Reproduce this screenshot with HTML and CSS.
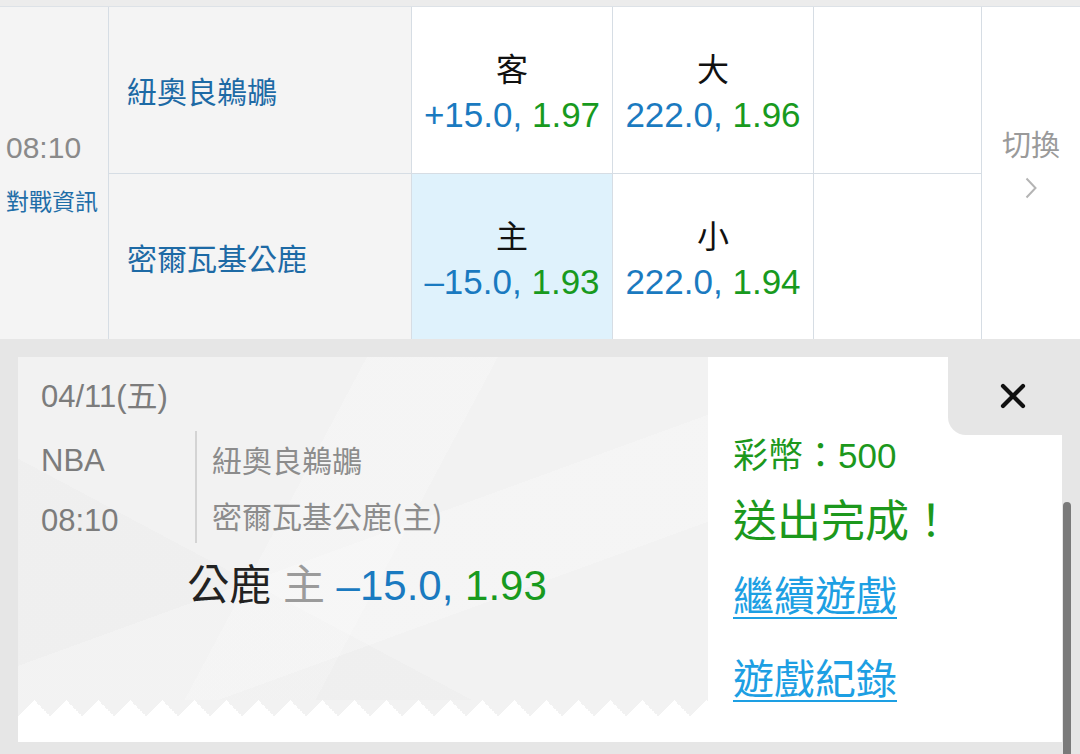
FILE: index.html
```html
<!DOCTYPE html>
<html lang="zh-Hant">
<head>
	<meta charset="UTF-8">
	<title>投注完成</title>
	<link rel="stylesheet" href="styles.css">
</head>
<body>
	<div class="topbar"></div>
	<div class="board">
		<div class="cell time-cell">
			<div class="time">08:10</div>
			<a class="vs-info">對戰資訊</a>
		</div>
		<div class="cell team">紐奧良鵜鶘</div>
		<div class="cell odds">
			<div class="label">客</div>
			<div class="line"><span class="hdp">+15.0,</span> <span class="price">1.97</span></div>
		</div>
		<div class="cell odds">
			<div class="label">大</div>
			<div class="line"><span class="hdp">222.0,</span> <span class="price">1.96</span></div>
		</div>
		<div class="cell"></div>
		<div class="cell switch">
			<div class="switch-text">切換</div>
			<svg class="chevron" width="12" height="22" viewBox="0 0 12 22">
				<polyline points="1.5,1.5 10.5,11 1.5,20.5" fill="none" stroke="#b4b4b4" stroke-width="2"/>
			</svg>
		</div>
		<div class="cell team">密爾瓦基公鹿</div>
		<div class="cell odds picked">
			<div class="label">主</div>
			<div class="line"><span class="hdp">–15.0,</span> <span class="price">1.93</span></div>
		</div>
		<div class="cell odds">
			<div class="label">小</div>
			<div class="line"><span class="hdp">222.0,</span> <span class="price">1.94</span></div>
		</div>
		<div class="cell"></div>
	</div>

	<div class="sheet">
		<div class="ticket">
			<div class="ticket-main">
				<div class="ticket-body">
					<div class="date">04/11(五)</div>
					<div class="info">
						<div class="meta">
							<div>NBA</div>
							<div>08:10</div>
						</div>
						<div class="teams">
							<div>紐奧良鵜鶘</div>
							<div>密爾瓦基公鹿(主)</div>
						</div>
					</div>
					<div class="bet">
						<span class="bet-team">公鹿</span>
						<span class="bet-side">主</span>
						<span class="hdp">–15.0,</span>
						<span class="price">1.93</span>
					</div>
				</div>
				<div class="ticket-edge"></div>
			</div>
			<div class="ticket-side">
				<div class="close-row">
					<div class="close">
						<svg width="28" height="28" viewBox="0 0 28 28">
							<path d="M4 4 L24 24 M24 4 L4 24" stroke="#111" stroke-width="4.2" stroke-linecap="round"/>
						</svg>
					</div>
				</div>
				<div class="coins">彩幣：500</div>
				<div class="done">送出完成！</div>
				<a class="link first">繼續遊戲</a>
				<a class="link">遊戲紀錄</a>
			</div>
		</div>
		<div class="scrollbar"></div>
	</div>
</body>
</html>
```

FILE: styles.css
```css
* { margin: 0; padding: 0; box-sizing: border-box; }
body {
	width: 1080px;
	height: 754px;
	overflow: hidden;
	background-color: #e6e6e6;
	font-family: "Liberation Sans", "Noto Sans CJK TC", sans-serif;
}

.topbar {
	height: 7px;
	background-color: #ececec;
	border-bottom: 1px solid #dde2e7;
}

/* 賽事表格 */
.board {
	display: grid;
	grid-template-columns: 108px 302px 200px 200px 167px 98px;
	grid-template-rows: 166px 165px;
	gap: 1px;
	background-color: #d6dde4;
}
.cell {
	background-color: #fff;
}
.time-cell {
	grid-row: span 2;
	background-color: #f4f4f4;
	display: flex;
	flex-direction: column;
	justify-content: center;
	padding-left: 6px;
}
.time {
	font-size: 30px;
	line-height: 54px;
	color: #8a8a8a;
}
.vs-info {
	font-size: 23px;
	line-height: 50px;
	color: #1f6ea8;
	font-family: "Noto Sans CJK TC", sans-serif;
}
.team {
	background-color: #f4f4f4;
	display: flex;
	align-items: center;
	padding-left: 18px;
	font-size: 30px;
	color: #1d6aa5;
	font-family: "Noto Sans CJK TC", sans-serif;
}
.odds {
	display: flex;
	flex-direction: column;
	justify-content: center;
	align-items: center;
	padding-top: 4px;
}
.odds.picked {
	background-color: #dff2fc;
}
.label {
	font-size: 32px;
	line-height: 46px;
	color: #111;
	font-family: "Noto Sans CJK TC", sans-serif;
}
.line {
	font-size: 35px;
	line-height: 50px;
	white-space: nowrap;
}
.hdp { color: #1a7ac0; }
.price { color: #189a1e; }

.switch {
	grid-column: 6;
	grid-row: 1 / span 2;
	display: flex;
	flex-direction: column;
	align-items: center;
	justify-content: center;
	padding-bottom: 24px;
}
.switch-text {
	font-size: 29px;
	line-height: 40px;
	color: #9a9a9a;
	font-family: "Noto Sans CJK TC", sans-serif;
}
.chevron {
	margin-top: 14px;
}

/* 注單 */
.sheet {
	position: relative;
	height: 415px;
	padding: 18px 18px 12px 18px;
}
.ticket {
	display: flex;
	height: 385px;
	background-color: #fff;
}
.ticket-main {
	width: 690px;
	display: flex;
	flex-direction: column;
	padding-bottom: 26px;
}
.ticket-body {
	flex: 1;
	padding: 22px 0 0 23px;
	background:
		linear-gradient(160deg, transparent 52%, rgba(255,255,255,0.22) 52%, rgba(255,255,255,0.22) 70%, transparent 70%),
		linear-gradient(28deg, rgba(0,0,0,0.012) 34%, transparent 34%),
		linear-gradient(118deg, transparent 40%, rgba(255,255,255,0.2) 40%, rgba(255,255,255,0.2) 55%, transparent 55%),
		#f2f2f2;
}
.ticket-edge {
	height: 16px;
	background: conic-gradient(from 135deg at 50% 0, #fff 90deg, #f2f2f2 0) 0 0 / 32px 16px repeat-x;
}
.date {
	font-size: 31px;
	line-height: 36px;
	color: #7c7c7c;
}
.info {
	display: flex;
	align-items: flex-start;
	margin-top: 16px;
}
.meta {
	width: 154px;
	font-size: 31px;
	line-height: 60px;
	color: #7c7c7c;
}
.teams {
	border-left: 2px solid #d4d4d4;
	padding-left: 15px;
	font-size: 30px;
	line-height: 56px;
	color: #8c8c8c;
	font-family: "Noto Sans CJK TC", sans-serif;
}
.bet {
	margin-top: 6px;
	margin-left: -23px;
	padding-left: 8px;
	text-align: center;
	font-size: 42px;
	line-height: 50px;
	white-space: nowrap;
}
.bet-team {
	color: #222;
	font-family: "Noto Sans CJK TC", sans-serif;
}
.bet-side {
	color: #9b9b9b;
	font-family: "Noto Sans CJK TC", sans-serif;
}

.ticket-side {
	flex: 1;
	display: flex;
	flex-direction: column;
	align-items: flex-start;
	padding-left: 25px;
}
.close-row {
	align-self: stretch;
	display: flex;
	justify-content: flex-end;
	height: 78px;
}
.close {
	width: 114px;
	height: 78px;
	background-color: #e6e6e6;
	border-bottom-left-radius: 18px;
	display: flex;
	align-items: center;
	justify-content: center;
	padding-left: 16px;
}
.coins {
	font-size: 35px;
	line-height: 42px;
	color: #1c981c;
}
.done {
	margin-top: 11px;
	font-size: 44px;
	line-height: 60px;
	color: #1c981c;
	font-family: "Noto Sans CJK TC", sans-serif;
}
.link {
	margin-top: 23px;
	font-size: 41px;
	line-height: 60px;
	color: #1d9fe3;
	text-decoration: underline;
	text-underline-offset: 6px;
	text-decoration-thickness: 2px;
	font-family: "Noto Sans CJK TC", sans-serif;
}
.link.first {
	margin-top: 15px;
}

.scrollbar {
	position: absolute;
	top: 163px;
	right: 9px;
	bottom: 0;
	width: 8px;
	background-color: #7a7a7a;
	border-radius: 4px 4px 0 0;
}
```
